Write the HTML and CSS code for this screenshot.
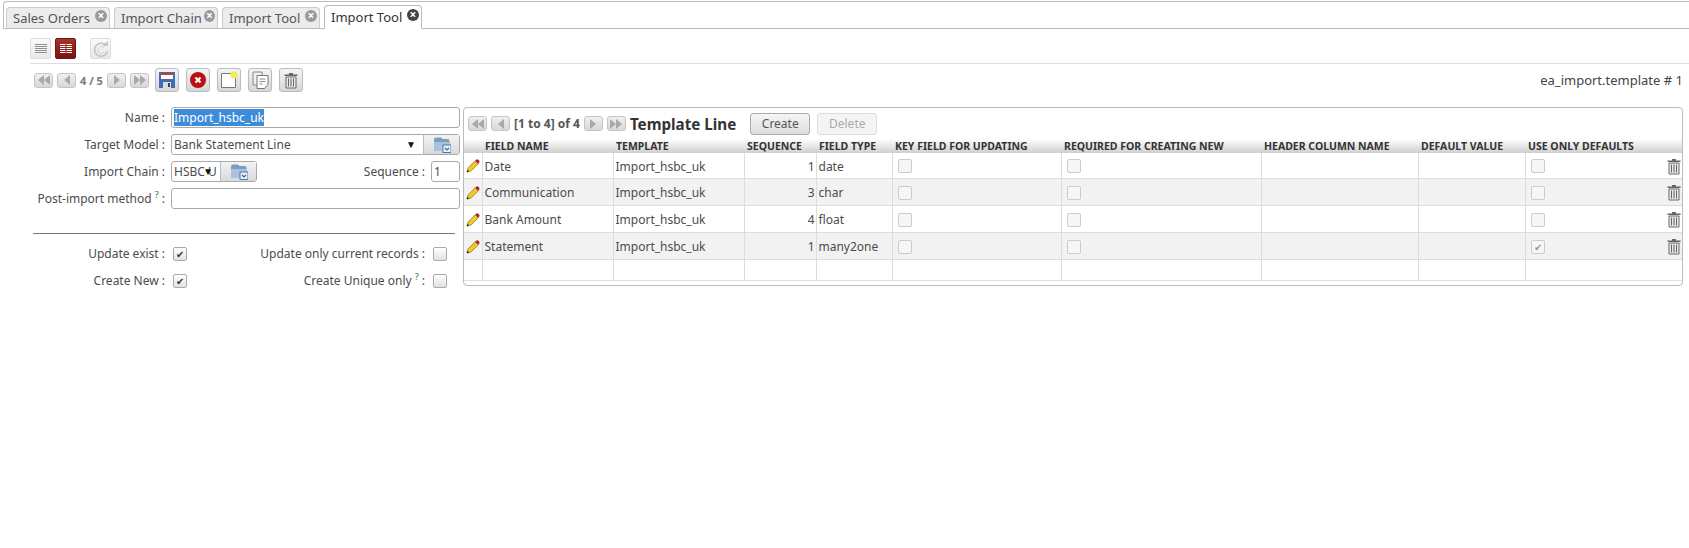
FILE: index.html
```html
<!DOCTYPE html>
<html lang="en">
  <head>
    <meta charset="UTF-8" />
    <title>Import Tool</title>
    <link rel="stylesheet" href="styles.css">
  </head>
  <body>
    <svg class="defs" width="0" height="0">
      <symbol id="i-first" viewBox="0 0 12 10"><path d="M6 0v10L0 5zM12 0v10L6 5z" fill="#a9a9a9"/></symbol>
      <symbol id="i-prev" viewBox="0 0 6 10"><path d="M6 0v10L0 5z" fill="#a9a9a9"/></symbol>
      <symbol id="i-next" viewBox="0 0 6 10"><path d="M0 0v10l6-5z" fill="#a9a9a9"/></symbol>
      <symbol id="i-last" viewBox="0 0 12 10"><path d="M0 0v10l6-5zM6 0v10l6-5z" fill="#a9a9a9"/></symbol>
      <symbol id="i-folder" viewBox="0 0 18 17">
        <path d="M1 3.500q0-2 2-2h5l1.500 1.500h5q2 0 2 2v9H1z" fill="#7c9cc0"/>
        <path d="M1 6h16v9H1z" fill="#a9c3de"/>
        <rect x="10" y="9" width="8" height="7.500" fill="#e8f0f8" stroke="#4f78a6"/>
        <path d="M12 12l2 2 2-2" fill="none" stroke="#3c6594" stroke-width="1.200"/>
      </symbol>
      <symbol id="i-pencil" viewBox="0 0 16 16">
        <path d="M1 15l1.500-5L10.500 2l3.500 3.500L6 13.500z" fill="#f0c92b" stroke="#8a6d10" stroke-width=".8"/>
        <path d="M10.500 2L12 .6q1-.6 2 .2l1 1q.8 1 .2 2L14 5.500z" fill="#b3202a"/>
        <path d="M1 15l.8-2.600 1.800 1.800z" fill="#222"/>
      </symbol>
      <symbol id="i-trash" viewBox="0 0 14 17">
        <path d="M5 1h4v1.500h4.500V4H.5V2.500H5z" fill="#666"/>
        <path d="M2 5h10v11H2z" fill="#eee" stroke="#666"/>
        <path d="M4.500 6.500v8M7 6.500v8M9.500 6.500v8" stroke="#666" stroke-width="1.100"/>
      </symbol>
    </svg>

    <div class="tabs">
      <div class="tab">Sales Orders <span class="tab-close">×</span></div>
      <div class="tab">Import Chain <span class="tab-close">×</span></div>
      <div class="tab">Import Tool <span class="tab-close">×</span></div>
      <div class="tab tab-active">Import Tool <span class="tab-close">×</span></div>
    </div>

    <div class="view-switch">
      <button class="view-btn" type="button">
        <svg width="12" height="10" viewBox="0 0 12 10"><path d="M0 .5h12M0 2.500h12M0 4.500h12M0 6.500h12M0 8.500h12" stroke="#777" stroke-width=".8"/></svg>
      </button>
      <button class="view-btn view-btn-active" type="button">
        <svg width="12" height="10" viewBox="0 0 12 10"><path d="M0 .5h12M0 2.500h12M0 4.500h12M0 6.500h12M0 8.500h12" stroke="#fff"/><path d="M6 0v10" stroke="#8b1a14"/></svg>
      </button>
      <button class="view-btn view-btn-log" type="button">
        <svg width="16" height="16" viewBox="0 0 16 16"><path d="M13 4.500A6.500 6.500 0 1 0 14.500 10" fill="none" stroke="#c4c4c4" stroke-width="1.600"/><path d="M11 7A3.500 3.500 0 1 0 11.500 10.500" fill="none" stroke="#d4d4d4"/><path d="M9 5h6V0z" fill="#c4c4c4"/></svg>
      </button>
    </div>

    <div class="toolbar">
      <button class="pager-btn" type="button"><svg width="12" height="10"><use href="#i-first"/></svg></button>
      <button class="pager-btn" type="button"><svg width="6" height="10"><use href="#i-prev"/></svg></button>
      <span class="pager-text">4 / 5</span>
      <button class="pager-btn" type="button"><svg width="6" height="10"><use href="#i-next"/></svg></button>
      <button class="pager-btn" type="button"><svg width="12" height="10"><use href="#i-last"/></svg></button>

      <button class="action-btn action-first" type="button">
        <svg width="16" height="16" viewBox="0 0 16 16"><path d="M0 0h16v16H0z" fill="#3f6fb0"/><path d="M2 1h12v6H2z" fill="#fff"/><path d="M2 1h12v2H2z" fill="#d0392b"/><path d="M4 10h8v6H4z" fill="#dcdcdc"/><path d="M9 11h2v4H9z" fill="#444"/></svg>
      </button>
      <button class="action-btn" type="button">
        <svg width="16" height="16" viewBox="0 0 16 16"><circle cx="8" cy="8" r="8" fill="#b80f12"/><path d="M5.500 5.500l5 5M10.500 5.500l-5 5" stroke="#fff" stroke-width="2.200"/></svg>
      </button>
      <button class="action-btn" type="button">
        <svg width="18" height="18" viewBox="0 0 18 18"><path d="M1.500 2.500h14v14h-14z" fill="#fff" stroke="#777"/><circle cx="14" cy="4" r="3.500" fill="#f5ea5c"/></svg>
      </button>
      <button class="action-btn" type="button">
        <svg width="17" height="18" viewBox="0 0 17 18"><path d="M1 1h9v13H1z" fill="#eee" stroke="#888"/><path d="M5 4.500h11v9l-3.500 4H5z" fill="#fff" stroke="#777"/><path d="M7.500 8h6M7.500 10.500h6M7.500 13h3" stroke="#888"/></svg>
      </button>
      <button class="action-btn" type="button">
        <svg width="14" height="17"><use href="#i-trash"/></svg>
      </button>
      <span class="record-id">ea_import.template # 1</span>
    </div>

    <div class="content">
      <div class="form">
        <div class="form-row">
          <label class="form-label">Name :</label>
          <div class="field"><span class="selected">Import_hsbc_uk</span></div>
        </div>
        <div class="form-row">
          <label class="form-label">Target Model :</label>
          <div class="combo">
            <div class="combo-text">Bank Statement Line<span class="combo-arrow">▼</span></div>
            <button class="combo-btn" type="button"><svg width="18" height="17"><use href="#i-folder"/></svg></button>
          </div>
        </div>
        <div class="form-row">
          <label class="form-label">Import Chain :</label>
          <div class="combo combo-small">
            <div class="combo-text">HSBC U<span class="combo-arrow">▼</span></div>
            <button class="combo-btn" type="button"><svg width="18" height="17"><use href="#i-folder"/></svg></button>
          </div>
          <label class="form-label form-label-seq">Sequence :</label>
          <div class="field field-seq">1</div>
        </div>
        <div class="form-row">
          <label class="form-label">Post-import method <sup class="help">?</sup> :</label>
          <div class="field"></div>
        </div>

        <div class="separator"></div>

        <div class="check-grid">
          <label class="form-label">Update exist :</label>
          <span class="check checked">✔</span>
          <label class="check-label">Update only current records :</label>
          <span class="check"></span>
          <label class="form-label">Create New :</label>
          <span class="check checked">✔</span>
          <label class="check-label">Create Unique only <sup class="help">?</sup> :</label>
          <span class="check"></span>
        </div>
      </div>

      <div class="panel">
        <div class="panel-head">
          <button class="pager-btn" type="button"><svg width="12" height="10"><use href="#i-first"/></svg></button>
          <button class="pager-btn" type="button"><svg width="6" height="10"><use href="#i-prev"/></svg></button>
          <span class="pager-count">[1 to 4] of 4</span>
          <button class="pager-btn" type="button"><svg width="6" height="10"><use href="#i-next"/></svg></button>
          <button class="pager-btn" type="button"><svg width="12" height="10"><use href="#i-last"/></svg></button>
          <h2 class="panel-title">Template Line</h2>
          <button class="text-btn" type="button">Create</button>
          <button class="text-btn text-btn-off" type="button">Delete</button>
        </div>
        <table class="grid">
          <colgroup>
            <col class="c-edit"><col class="c-name"><col class="c-tpl"><col class="c-seq"><col class="c-type">
            <col class="c-key"><col class="c-req"><col class="c-head"><col class="c-def"><col class="c-use"><col>
          </colgroup>
          <thead>
            <tr>
              <th></th><th>Field Name</th><th>Template</th><th>Sequence</th><th>Field Type</th>
              <th>Key Field for Updating</th><th>Required for Creating New</th><th>Header Column Name</th>
              <th>Default Value</th><th>Use Only Defaults</th><th></th>
            </tr>
          </thead>
          <tbody>
            <tr>
              <td class="cell-icon"><svg width="14" height="14"><use href="#i-pencil"/></svg></td>
              <td>Date</td><td>Import_hsbc_uk</td><td class="num">1</td><td>date</td>
              <td><span class="check off"></span></td><td><span class="check off"></span></td><td></td><td></td>
              <td><span class="check off"></span></td>
              <td class="cell-del"><svg width="14" height="17"><use href="#i-trash"/></svg></td>
            </tr>
            <tr>
              <td class="cell-icon"><svg width="14" height="14"><use href="#i-pencil"/></svg></td>
              <td>Communication</td><td>Import_hsbc_uk</td><td class="num">3</td><td>char</td>
              <td><span class="check off"></span></td><td><span class="check off"></span></td><td></td><td></td>
              <td><span class="check off"></span></td>
              <td class="cell-del"><svg width="14" height="17"><use href="#i-trash"/></svg></td>
            </tr>
            <tr>
              <td class="cell-icon"><svg width="14" height="14"><use href="#i-pencil"/></svg></td>
              <td>Bank Amount</td><td>Import_hsbc_uk</td><td class="num">4</td><td>float</td>
              <td><span class="check off"></span></td><td><span class="check off"></span></td><td></td><td></td>
              <td><span class="check off"></span></td>
              <td class="cell-del"><svg width="14" height="17"><use href="#i-trash"/></svg></td>
            </tr>
            <tr>
              <td class="cell-icon"><svg width="14" height="14"><use href="#i-pencil"/></svg></td>
              <td>Statement</td><td>Import_hsbc_uk</td><td class="num">1</td><td>many2one</td>
              <td><span class="check off"></span></td><td><span class="check off"></span></td><td></td><td></td>
              <td><span class="check off checked">✔</span></td>
              <td class="cell-del"><svg width="14" height="17"><use href="#i-trash"/></svg></td>
            </tr>
            <tr class="row-empty">
              <td></td><td></td><td></td><td></td><td></td><td></td><td></td><td></td><td></td><td></td><td></td>
            </tr>
          </tbody>
        </table>
      </div>
    </div>
  </body>
</html>
```

FILE: styles.css
```css
body {
  margin: 0;
  font-family: "Noto Sans", sans-serif;
  font-size: 12px;
  color: #4c4c4c;
  background-color: white;
}
button {
  font-family: inherit;
  cursor: pointer;
  padding: 0;
}
.defs {
  display: block;
  height: 0;
}

/* tabs */
.tabs {
  display: flex;
  align-items: flex-end;
  gap: 4px;
  height: 28px;
  margin: 1px 0 0 3px;
  padding-left: 2px;
  border: 1px solid #bbb;
  border-right: none;
  border-top-left-radius: 4px;
  box-sizing: border-box;
}
.tab {
  display: flex;
  align-items: center;
  justify-content: space-between;
  height: 22px;
  margin-bottom: -1px;
  padding: 0 2px 0 6px;
  font-size: 13px;
  color: #555;
  white-space: nowrap;
  background-color: #ececec;
  border: 1px solid #ccc;
  border-bottom: 1px solid #bbb;
  border-radius: 4px 4px 0 0;
  box-sizing: border-box;
  width: 104px;
}
.tab:nth-child(3) {
  width: 98px;
}
.tab-active {
  width: 98px;
  height: 24px;
  color: #333;
  background-color: white;
  border-color: #bbb;
  border-bottom-color: white;
}
.tab-close {
  display: inline-block;
  width: 12px;
  height: 12px;
  margin: 0 0 4px 2px;
  font-size: 12px;
  font-weight: bold;
  line-height: 11px;
  text-align: center;
  color: white;
  background-color: #999;
  border-radius: 50%;
}
.tab-active .tab-close {
  background-color: #444;
}

/* toolbars */
.view-switch {
  display: flex;
  gap: 4px;
  align-items: center;
  height: 21px;
  margin: 9px 0 0 30px;
  padding-bottom: 4px;
  border-bottom: 1px solid #ddd;
}
.view-btn {
  display: flex;
  align-items: center;
  justify-content: center;
  width: 21px;
  height: 21px;
  background: linear-gradient(#fafafa, #e8e8e8);
  border: 1px solid #ddd;
  border-radius: 2px;
}
.view-btn-active {
  background: linear-gradient(#a8332b, #761510);
  border-color: #761510;
}
.view-btn-log {
  margin-left: 10px;
}
.toolbar {
  display: flex;
  align-items: center;
  height: 24px;
  margin: 4px 6px 0 34px;
}
.pager-btn {
  display: inline-flex;
  align-items: center;
  justify-content: center;
  width: 19px;
  height: 15px;
  margin-right: 4px;
  background: linear-gradient(#f0f0f0, #d8d8d8);
  border: 1px solid #c4c4c4;
  border-radius: 3px;
}
.pager-text {
  width: 24px;
  margin-right: 3px;
  font-size: 11px;
  font-weight: bold;
  color: #777;
}
.action-btn {
  display: flex;
  align-items: center;
  justify-content: center;
  width: 24px;
  height: 24px;
  margin-right: 7px;
  background: linear-gradient(#f4f4f4, #d6d6d6);
  border: 1px solid #bbb;
  border-radius: 3px;
}
.action-first {
  margin-left: 2px;
}
.record-id {
  margin-left: auto;
  font-size: 13px;
  color: #444;
}

/* form */
.content {
  display: flex;
  gap: 3px;
  margin: 15px 6px 0 30px;
  align-items: flex-start;
}
.form {
  flex: 0 0 430px;
}
.form-row {
  display: flex;
  align-items: center;
  gap: 6px;
  height: 21px;
  margin-bottom: 6px;
}
.form-label {
  flex: 0 0 135px;
  font-size: 12px;
  text-align: right;
  white-space: nowrap;
}
.form-label-seq {
  flex: 1;
}
.field {
  flex: 1;
  height: 21px;
  padding: 0 2px;
  line-height: 19px;
  background-color: white;
  border: 1px solid #aaa;
  border-radius: 3px;
  box-sizing: border-box;
}
.field-seq {
  flex: 0 0 29px;
}
.selected {
  color: white;
  background-color: #3b8ddb;
}
.combo {
  flex: 1;
  display: flex;
  height: 21px;
  border: 1px solid #aaa;
  border-radius: 3px;
  box-sizing: border-box;
}
.combo-small {
  flex: 0 0 86px;
}
.combo-text {
  position: relative;
  flex: 1;
  padding: 0 2px;
  line-height: 19px;
  overflow: hidden;
  white-space: nowrap;
}
.combo-arrow {
  position: absolute;
  right: 7px;
  top: 0;
  font-size: 10px;
  color: #111;
}
.combo-btn {
  display: flex;
  align-items: center;
  justify-content: center;
  flex: 0 0 36px;
  background: linear-gradient(#f4f4f4, #d9d9d9);
  border: none;
  border-left: 1px solid #bbb;
}
.help {
  font-size: 9px;
  color: #2c7a2c;
  line-height: 0;
}
.separator {
  height: 1px;
  margin: 24px 5px 11px 3px;
  background-color: #777;
}
.check-grid {
  display: grid;
  grid-template-columns: 135px 61px 199px 1fr;
  row-gap: 10px;
  align-items: center;
}
.check-grid .form-label {
  line-height: 14px;
}
.check-label {
  font-size: 12px;
  text-align: right;
  white-space: nowrap;
}
.check {
  display: block;
  width: 12px;
  height: 12px;
  margin-left: 8px;
  font-size: 10px;
  line-height: 12px;
  text-align: center;
  color: #333;
  background: linear-gradient(#fff, #e2e2e2);
  border: 1px solid #aaa;
  border-radius: 2px;
}

/* one2many panel */
.panel {
  flex: 1;
  padding-bottom: 4px;
  border: 1px solid #bbb;
  border-radius: 4px;
  min-width: 0;
  overflow: hidden;
}
.panel-head {
  display: flex;
  align-items: center;
  height: 31px;
  padding: 0 0 0 4px;
}
.pager-count {
  margin-right: 4px;
  font-size: 12px;
  font-weight: bold;
  color: #555;
}
.panel-title {
  margin: 0 14px 0 0;
  font-size: 15.200px;
  color: #333;
}
.text-btn {
  width: 60px;
  height: 22px;
  margin-right: 7px;
  font-size: 12px;
  color: #555;
  background: linear-gradient(#f6f6f6, #dcdcdc);
  border: 1px solid #aaa;
  border-radius: 3px;
}
.text-btn-off {
  color: #aaa;
  background: #f4f4f4;
  border-color: #ddd;
}
.grid {
  width: 100%;
  table-layout: fixed;
  border-collapse: collapse;
}
.c-edit { width: 18px; }
.c-name, .c-tpl { width: 131px; }
.c-seq { width: 72px; }
.c-type { width: 76px; }
.c-key { width: 169px; }
.c-req { width: 200px; }
.c-head { width: 157px; }
.c-def { width: 107px; }
.c-use { width: 131px; }
.grid th {
  height: 14px;
  padding: 0 0 0 3px;
  font-size: 10.500px;
  line-height: 14px;
  text-align: left;
  text-transform: uppercase;
  white-space: nowrap;
  color: #333;
  background: linear-gradient(#fff, #cfcfcf);
}
.grid td {
  height: 25px;
  padding: 1px 0 0 2px;
  border: 1px solid #ddd;
  border-top: none;
  white-space: nowrap;
}
.grid tbody tr:first-child td {
  height: 24px;
}
.grid td:first-child,
.grid td:last-child,
.grid td:nth-last-child(2) {
  border-left: none;
  border-right: none;
}
.grid td:nth-last-child(2) {
  border-left: 1px solid #ddd;
}
.grid td:first-child {
  border-right: 1px solid #ddd;
}
.grid tbody tr:nth-child(even) td {
  background-color: #f2f2f2;
}
.grid .row-empty td {
  height: 20px;
  padding-top: 0;
}
.grid .num {
  padding-right: 1px;
  text-align: right;
}
.cell-icon svg,
.cell-del svg {
  display: block;
}
.check.off {
  margin-left: 3px;
  color: #999;
  background: #f6f6f6;
  border-color: #ccc;
}
.cell-del svg {
  margin-left: auto;
  margin-right: 1px;
}
```
